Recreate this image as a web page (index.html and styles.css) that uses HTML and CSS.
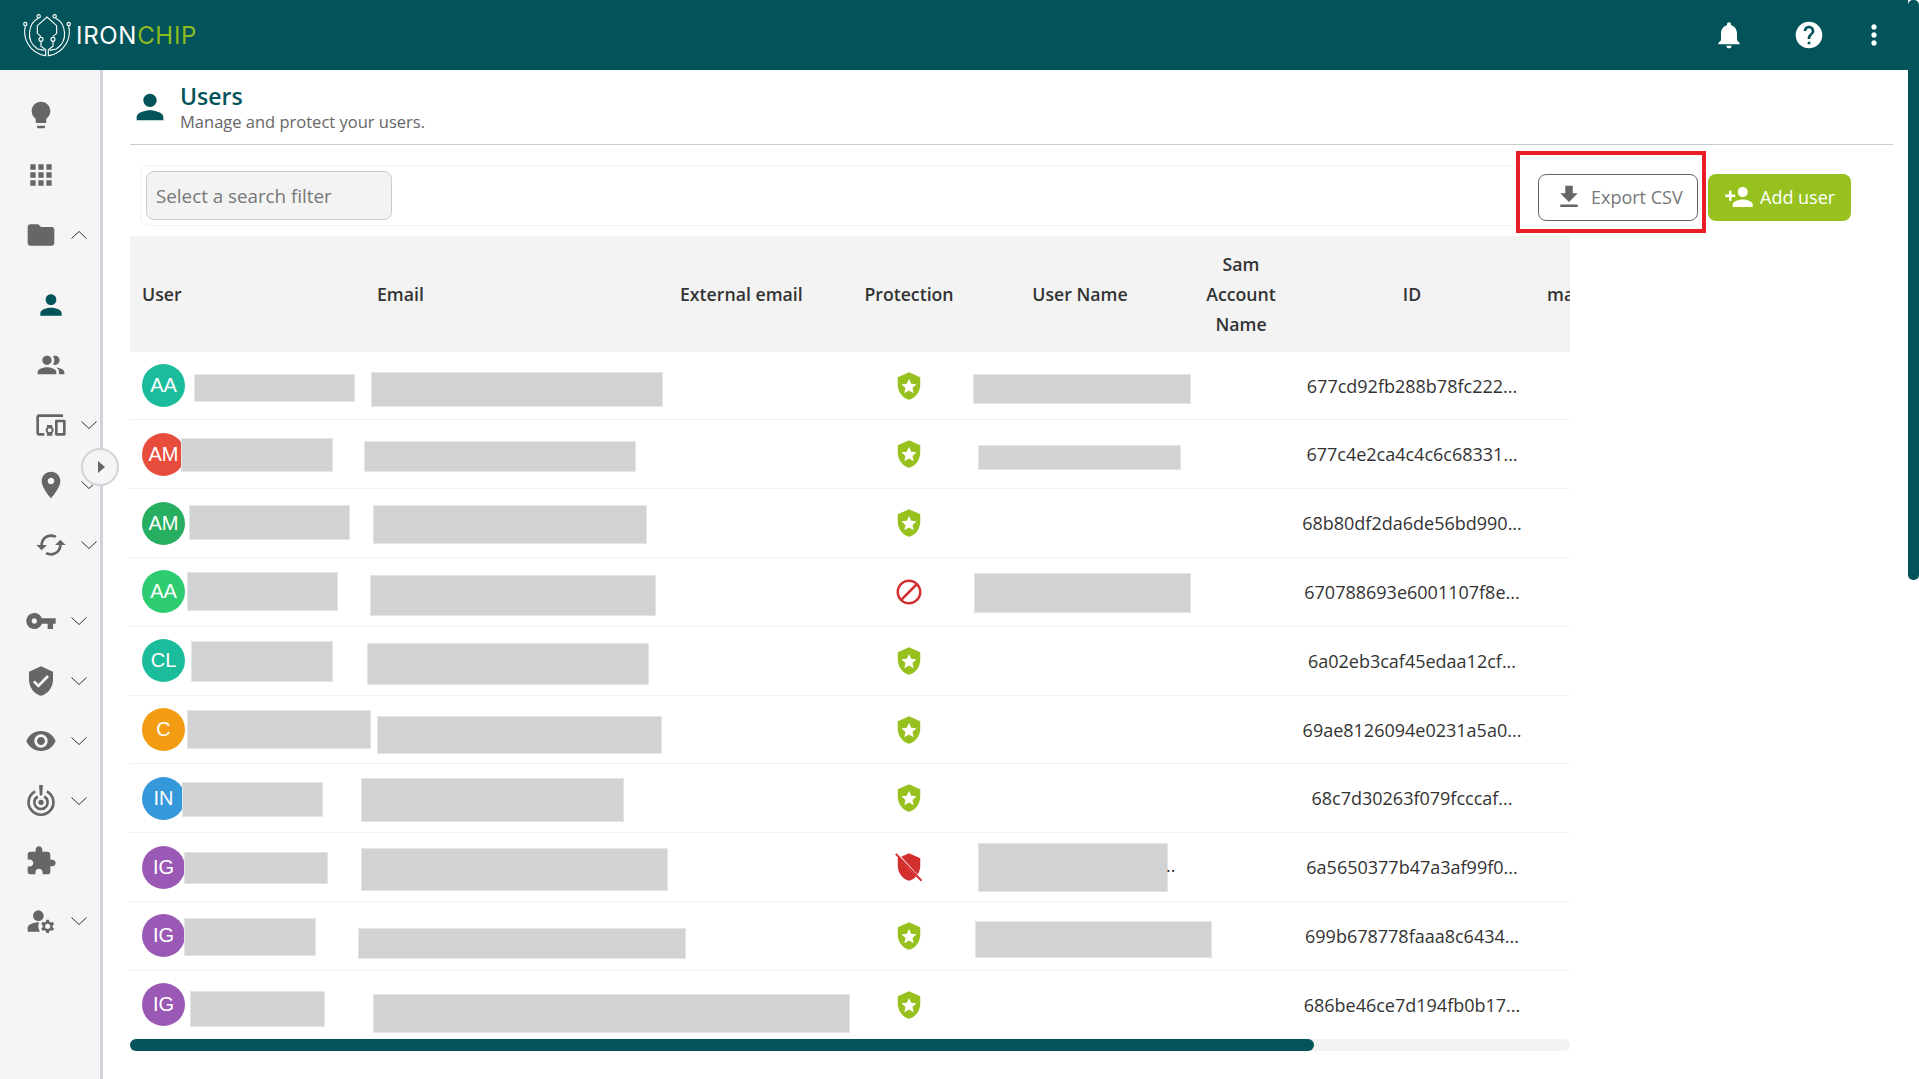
FILE: index.html
```html
<!DOCTYPE html>
<html lang="en">
<head>
    <meta charset="UTF-8">
    <title>Users</title>
    <link rel="stylesheet" href="styles.css">
</head>
<body>
    <svg class="sprite" width="0" height="0">
        <symbol id="i-person" viewBox="0 0 24 24"><path d="M12 12c2.21 0 4-1.79 4-4s-1.79-4-4-4-4 1.79-4 4 1.79 4 4 4zm0 2c-2.67 0-8 1.34-8 4v2h16v-2c0-2.66-5.33-4-8-4z"/></symbol>
        <symbol id="i-down" viewBox="0 0 16 8"><path class="chev-line" d="M.5.5 8 7.5 15.5.5"/></symbol>
        <symbol id="i-up" viewBox="0 0 16 8"><path class="chev-line" d="M.5 7.5 8 .5l7.5 7"/></symbol>
        <symbol id="i-good" viewBox="0 0 24 24"><path class="shield-green" d="M12 1 3 5v6c0 5.55 3.84 10.74 9 12 5.16-1.26 9-6.45 9-12V5l-9-4z"/><path class="star-white" d="m12 6.3 1.75 3.9 4.25.45-3.17 2.85.88 4.2L12 15.55 8.29 17.7l.88-4.2L6 10.65l4.25-.45z"/></symbol>
        <symbol id="i-block" viewBox="0 0 24 24"><path class="fill-red" d="M12 2C6.48 2 2 6.48 2 12s4.48 10 10 10 10-4.48 10-10S17.52 2 12 2zM4 12c0-4.42 3.58-8 8-8 1.85 0 3.55.63 4.9 1.69L5.69 16.9C4.63 15.55 4 13.85 4 12zm8 8c-1.85 0-3.55-.63-4.9-1.69L18.31 7.1C19.37 8.45 20 10.15 20 12c0 4.42-3.58 8-8 8z"/></symbol>
        <symbol id="i-off" viewBox="0 0 24 24"><path class="fill-red" d="M12 1 3 5v6c0 5.55 3.84 10.74 9 12 5.16-1.26 9-6.45 9-12V5l-9-4z"/><path class="slash-white" d="M1 0 23 24"/><path class="slash-red" d="M1.5 1.5 22 23"/></symbol>
    </svg>

    <header class="topbar">
        <div class="brand">
            <svg class="brand-mark" viewBox="65 38 150 132">
                <g class="brand-lines">
                    <path d="M75 77C66 112 86 156 134 166"/>
                    <path d="M205 77C214 112 194 156 146 166"/>
                    <path d="M114 54C84 68 74 122 112 146l20 4"/>
                    <path d="M166 54c30 14 40 68 2 92l-20 4"/>
                    <path d="M122 124v14l14 10v20"/>
                    <path d="M158 124v14l-14 10v20"/>
                    <path d="M122 109l-11-10V76l29-26 29 26v23l-11 10"/>
                    <circle cx="75" cy="71" r="5"/>
                    <circle cx="205" cy="71" r="5"/>
                    <circle cx="115" cy="48" r="5"/>
                    <circle cx="163" cy="48" r="5"/>
                    <circle cx="122" cy="117" r="6"/>
                    <circle cx="158" cy="117" r="6"/>
                </g>
            </svg>
            <span class="brand-name">IRON<span class="brand-accent">CHIP</span></span>
        </div>
        <div class="topbar-actions">
            <svg class="top-icon bell" viewBox="0 0 24 24"><path d="M12 22c1.1 0 2-.9 2-2h-4c0 1.1.89 2 2 2zm6-6v-5c0-3.07-1.64-5.64-4.5-6.32V4c0-.83-.67-1.5-1.5-1.5s-1.5.67-1.5 1.5v.68C7.63 5.36 6 7.92 6 11v5l-2 2v1h16v-1l-2-2z"/></svg>
            <svg class="top-icon help" viewBox="0 0 24 24"><path d="M12 2C6.48 2 2 6.48 2 12s4.48 10 10 10 10-4.48 10-10S17.52 2 12 2zm1 17h-2v-2h2v2zm2.07-7.75l-.9.92C13.45 12.9 13 13.5 13 15h-2v-.5c0-1.1.45-2.1 1.17-2.83l1.24-1.26c.37-.36.59-.86.59-1.41 0-1.1-.9-2-2-2s-2 .9-2 2H8c0-2.21 1.79-4 4-4s4 1.79 4 4c0 .88-.36 1.68-.93 2.25z"/></svg>
            <svg class="top-icon more" viewBox="0 0 24 24"><path d="M12 8c1.1 0 2-.9 2-2s-.9-2-2-2-2 .9-2 2 .9 2 2 2zm0 2c-1.1 0-2 .9-2 2s.9 2 2 2 2-.9 2-2-.9-2-2-2zm0 6c-1.1 0-2 .9-2 2s.9 2 2 2 2-.9 2-2-.9-2-2-2z"/></svg>
        </div>
    </header>

    <div class="layout">
        <nav class="sidebar">
            <div class="nav-item"><svg class="nav-icon" viewBox="0 0 24 24"><path d="M9 21c0 .55.45 1 1 1h4c.55 0 1-.45 1-1v-1H9v1zm3-19C8.14 2 5 5.14 5 9c0 2.38 1.19 4.47 3 5.74V17c0 .55.45 1 1 1h6c.55 0 1-.45 1-1v-2.26c1.81-1.27 3-3.36 3-5.74 0-3.86-3.14-7-7-7z"/></svg></div>
            <div class="nav-item"><svg class="nav-icon" viewBox="0 0 24 24"><path d="M4 8h4V4H4v4zm6 12h4v-4h-4v4zm-6 0h4v-4H4v4zm0-6h4v-4H4v4zm6 0h4v-4h-4v4zm6-10v4h4V4h-4zm-6 4h4V4h-4v4zm6 6h4v-4h-4v4zm0 6h4v-4h-4v4z"/></svg></div>
            <div class="nav-item"><svg class="nav-icon" viewBox="0 0 24 24"><path d="M10 4H4c-1.1 0-1.99.9-1.99 2L2 18c0 1.1.9 2 2 2h16c1.1 0 2-.9 2-2V8c0-1.1-.9-2-2-2h-8l-2-2z"/></svg><svg class="chev"><use href="#i-up"/></svg></div>

            <div class="nav-item sub first-sub"><svg class="nav-icon active" viewBox="0 0 24 24"><use href="#i-person"/></svg></div>
            <div class="nav-item sub"><svg class="nav-icon" viewBox="0 0 24 24"><path d="M9 13.75c-2.34 0-7 1.17-7 3.5V19h14v-1.75c0-2.33-4.66-3.5-7-3.5zM9 12c1.93 0 3.5-1.57 3.5-3.5S10.93 5 9 5 5.5 6.57 5.5 8.5 7.07 12 9 12zm7.04 1.81c1.16.84 1.96 1.96 1.96 3.44V19h4v-1.75c0-2.02-3.5-3.17-5.96-3.44zM15 12c1.93 0 3.5-1.57 3.5-3.5S16.93 5 15 5c-.54 0-1.04.13-1.5.35.63.89 1 1.98 1 3.15s-.37 2.26-1 3.15c.46.22.96.35 1.5.35z"/></svg></div>
            <div class="nav-item sub"><svg class="nav-icon" viewBox="0 0 24 24"><path d="M3 6h18V4H3c-1.1 0-2 .9-2 2v12c0 1.1.9 2 2 2h4v-2H3V6zm10 6H9v1.78c-.61.55-1 1.33-1 2.22s.39 1.67 1 2.22V20h4v-1.78c.61-.55 1-1.34 1-2.22s-.39-1.67-1-2.22V12zm-2 5.5c-.83 0-1.5-.67-1.5-1.5s.67-1.5 1.5-1.5 1.5.67 1.5 1.5-.67 1.5-1.5 1.5zM22 8h-6c-.5 0-1 .5-1 1v10c0 .5.5 1 1 1h6c.5 0 1-.5 1-1V9c0-.5-.5-1-1-1zm-1 10h-4v-8h4v8z"/></svg><svg class="chev"><use href="#i-down"/></svg></div>
            <div class="nav-item sub"><svg class="nav-icon" viewBox="0 0 24 24"><path d="M12 2C8.13 2 5 5.13 5 9c0 5.25 7 13 7 13s7-7.75 7-13c0-3.87-3.13-7-7-7zm0 9.5c-1.38 0-2.5-1.12-2.5-2.5s1.12-2.5 2.5-2.5 2.5 1.12 2.5 2.5-1.12 2.5-2.5 2.5z"/></svg><svg class="chev"><use href="#i-down"/></svg></div>
            <div class="nav-item sub"><svg class="nav-icon" viewBox="0 0 24 24"><path d="M19 8l-4 4h3c0 3.31-2.69 6-6 6-1.01 0-1.97-.25-2.8-.7l-1.46 1.46C8.97 19.54 10.43 20 12 20c4.42 0 8-3.58 8-8h3l-4-4zM6 12c0-3.31 2.69-6 6-6 1.01 0 1.97.25 2.8.7l1.46-1.46C15.03 4.46 13.57 4 12 4c-4.42 0-8 3.58-8 8H1l4 4 4-4H6z"/></svg><svg class="chev"><use href="#i-down"/></svg></div>

            <div class="nav-item group-start"><svg class="nav-icon" viewBox="0 0 24 24"><path d="M12.65 10C11.83 7.67 9.61 6 7 6c-3.31 0-6 2.69-6 6s2.69 6 6 6c2.61 0 4.83-1.67 5.65-4H17v4h4v-4h2v-4H12.65zM7 14c-1.1 0-2-.9-2-2s.9-2 2-2 2 .9 2 2-.9 2-2 2z"/></svg><svg class="chev"><use href="#i-down"/></svg></div>
            <div class="nav-item"><svg class="nav-icon" viewBox="0 0 24 24"><path d="M12 1L3 5v6c0 5.55 3.84 10.74 9 12 5.16-1.26 9-6.45 9-12V5l-9-4zm-2 16l-4-4 1.41-1.41L10 14.17l6.59-6.59L18 9l-8 8z"/></svg><svg class="chev"><use href="#i-down"/></svg></div>
            <div class="nav-item"><svg class="nav-icon" viewBox="0 0 24 24"><path d="M12 4.5C7 4.5 2.73 7.61 1 12c1.73 4.39 6 7.5 11 7.5s9.27-3.11 11-7.5c-1.73-4.39-6-7.5-11-7.5zM12 17c-2.76 0-5-2.24-5-5s2.24-5 5-5 5 2.24 5 5-2.24 5-5 5zm0-8c-1.66 0-3 1.34-3 3s1.34 3 3 3 3-1.34 3-3-1.34-3-3-3z"/></svg><svg class="chev"><use href="#i-down"/></svg></div>
            <div class="nav-item"><svg class="nav-icon" viewBox="0 1.6 24 24"><path class="target-line" d="M7.6 6.4a9.3 9.3 0 1 0 8.8 0"/><path class="target-line" d="M9.6 10.2a5 5 0 1 0 4.8 0"/><circle cx="12" cy="14.6" r="2"/><path d="M10.6 2.4a1.4 1.4 0 0 1 2.8 0l-.5 7h-1.8z"/></svg><svg class="chev"><use href="#i-down"/></svg></div>
            <div class="nav-item"><svg class="nav-icon" viewBox="0 0 24 24"><path d="M20.5 11H19V7c0-1.1-.9-2-2-2h-4V3.5C13 2.12 11.88 1 10.5 1S8 2.12 8 3.5V5H4c-1.1 0-1.99.9-1.99 2v3.8H3.5c1.49 0 2.7 1.21 2.7 2.7s-1.21 2.7-2.7 2.7H2V20c0 1.1.9 2 2 2h3.8v-1.5c0-1.49 1.21-2.7 2.7-2.7 1.49 0 2.7 1.21 2.7 2.7V22H17c1.1 0 2-.9 2-2v-4h1.5c1.38 0 2.5-1.12 2.5-2.5S21.88 11 20.5 11z"/></svg></div>
            <div class="nav-item"><svg class="nav-icon" viewBox="0 0 24 24"><circle cx="10" cy="8" r="4"/><path d="M10.67 13.02c-.22-.01-.44-.02-.67-.02-2.42 0-4.68.67-6.61 1.82-.88.52-1.39 1.5-1.39 2.53V20h9.26c-.79-1.13-1.26-2.51-1.26-4 0-1.07.25-2.07.67-2.98zM20.75 16c0-.22-.03-.42-.06-.63l1.14-1.01-1-1.73-1.45.49c-.32-.27-.68-.48-1.08-.63L18 11h-2l-.3 1.49c-.4.15-.76.36-1.08.63l-1.45-.49-1 1.73 1.14 1.01c-.03.21-.06.41-.06.63s.03.42.06.63l-1.14 1.01 1 1.73 1.45-.49c.32.27.68.48 1.08.63L16 21h2l.3-1.49c.4-.15.76-.36 1.08-.63l1.45.49 1-1.73-1.14-1.01c.03-.21.06-.41.06-.63zM17 18c-1.1 0-2-.9-2-2s.9-2 2-2 2 .9 2 2-.9 2-2 2z"/></svg><svg class="chev"><use href="#i-down"/></svg></div>

            <button class="side-toggle"><span class="toggle-arrow"></span></button>
        </nav>

        <main class="content">
            <div class="page-head">
                <svg class="page-icon"><use href="#i-person"/></svg>
                <div>
                    <h1>Users</h1>
                    <p>Manage and protect your users.</p>
                </div>
            </div>

            <div class="toolbar">
                <div class="search-card">
                    <div class="search-input">Select a search filter</div>
                </div>
                <div class="export-wrap">
                    <button class="btn btn-export">
                        <svg class="btn-icon" viewBox="0 0 24 24"><path d="M19 9h-4V3H9v6H5l7 7 7-7zM5 18v2h14v-2H5z"/></svg>
                        Export CSV
                    </button>
                    <span class="highlight"></span>
                </div>
                <button class="btn btn-add">
                    <svg class="btn-icon" viewBox="0 0 24 24"><path d="M15 12c2.21 0 4-1.79 4-4s-1.79-4-4-4-4 1.79-4 4 1.79 4 4 4zm-9-2V7H4v3H1v2h3v3h2v-3h3v-2H6zm9 4c-2.67 0-8 1.34-8 4v2h16v-2c0-2.66-5.33-4-8-4z"/></svg>
                    Add user
                </button>
            </div>

            <div class="table-wrap">
                <div class="row head">
                    <div class="cell">User</div>
                    <div class="cell">Email</div>
                    <div class="cell">External email</div>
                    <div class="cell center">Protection</div>
                    <div class="cell center">User Name</div>
                    <div class="cell center">Sam Account Name</div>
                    <div class="cell center">ID</div>
                    <div class="cell">mail</div>
                </div>

                <div class="row">
                    <div class="cell"><span class="avatar c-teal">AA</span></div><div class="cell"></div><div class="cell"></div>
                    <div class="cell center"><svg class="status"><use href="#i-good"/></svg></div><div class="cell"></div><div class="cell"></div>
                    <div class="cell center">677cd92fb288b78fc222...</div><div class="cell"></div>
                    <span class="mask m1-name"></span><span class="mask m1-email"></span><span class="mask m1-user"></span>
                </div>
                <div class="row">
                    <div class="cell"><span class="avatar c-red">AM</span></div><div class="cell"></div><div class="cell"></div>
                    <div class="cell center"><svg class="status"><use href="#i-good"/></svg></div><div class="cell"></div><div class="cell"></div>
                    <div class="cell center">677c4e2ca4c4c6c68331...</div><div class="cell"></div>
                    <span class="mask m2-name"></span><span class="mask m2-email"></span><span class="mask m2-user"></span>
                </div>
                <div class="row">
                    <div class="cell"><span class="avatar c-green">AM</span></div><div class="cell"></div><div class="cell"></div>
                    <div class="cell center"><svg class="status"><use href="#i-good"/></svg></div><div class="cell"></div><div class="cell"></div>
                    <div class="cell center">68b80df2da6de56bd990...</div><div class="cell"></div>
                    <span class="mask m3-name"></span><span class="mask m3-email"></span>
                </div>
                <div class="row">
                    <div class="cell"><span class="avatar c-emerald">AA</span></div><div class="cell"></div><div class="cell"></div>
                    <div class="cell center"><svg class="status"><use href="#i-block"/></svg></div><div class="cell"></div><div class="cell"></div>
                    <div class="cell center">670788693e6001107f8e...</div><div class="cell"></div>
                    <span class="mask m4-name"></span><span class="mask m4-email"></span><span class="mask m4-user"></span>
                </div>
                <div class="row">
                    <div class="cell"><span class="avatar c-teal">CL</span></div><div class="cell"></div><div class="cell"></div>
                    <div class="cell center"><svg class="status"><use href="#i-good"/></svg></div><div class="cell"></div><div class="cell"></div>
                    <div class="cell center">6a02eb3caf45edaa12cf...</div><div class="cell"></div>
                    <span class="mask m5-name"></span><span class="mask m5-email"></span>
                </div>
                <div class="row">
                    <div class="cell"><span class="avatar c-orange">C</span></div><div class="cell"></div><div class="cell"></div>
                    <div class="cell center"><svg class="status"><use href="#i-good"/></svg></div><div class="cell"></div><div class="cell"></div>
                    <div class="cell center">69ae8126094e0231a5a0...</div><div class="cell"></div>
                    <span class="mask m6-name"></span><span class="mask m6-email"></span>
                </div>
                <div class="row">
                    <div class="cell"><span class="avatar c-blue">IN</span></div><div class="cell"></div><div class="cell"></div>
                    <div class="cell center"><svg class="status"><use href="#i-good"/></svg></div><div class="cell"></div><div class="cell"></div>
                    <div class="cell center">68c7d30263f079fcccaf...</div><div class="cell"></div>
                    <span class="mask m7-name"></span><span class="mask m7-email"></span>
                </div>
                <div class="row">
                    <div class="cell"><span class="avatar c-purple">IG</span></div><div class="cell"></div><div class="cell"></div>
                    <div class="cell center"><svg class="status"><use href="#i-off"/></svg></div><div class="cell"></div><div class="cell"></div>
                    <div class="cell center">6a5650377b47a3af99f0...</div><div class="cell"></div>
                    <span class="mask m8-name"></span><span class="mask m8-email"></span><span class="mask m8-user"></span><span class="mask-tail">..</span>
                </div>
                <div class="row">
                    <div class="cell"><span class="avatar c-purple">IG</span></div><div class="cell"></div><div class="cell"></div>
                    <div class="cell center"><svg class="status"><use href="#i-good"/></svg></div><div class="cell"></div><div class="cell"></div>
                    <div class="cell center">699b678778faaa8c6434...</div><div class="cell"></div>
                    <span class="mask m9-name"></span><span class="mask m9-email"></span><span class="mask m9-user"></span>
                </div>
                <div class="row last">
                    <div class="cell"><span class="avatar c-purple">IG</span></div><div class="cell"></div><div class="cell"></div>
                    <div class="cell center"><svg class="status"><use href="#i-good"/></svg></div><div class="cell"></div><div class="cell"></div>
                    <div class="cell center">686be46ce7d194fb0b17...</div><div class="cell"></div>
                    <span class="mask m10-name"></span><span class="mask m10-email"></span>
                </div>
            </div>

            <div class="h-scroll"><div class="h-thumb"></div></div>
        </main>
    </div>

    <div class="v-scroll"><div class="v-thumb"></div></div>
</body>
</html>
```

FILE: styles.css
```css
html, body {
    height: 100%;
    overflow: hidden;
}

body {
    margin: 0;
    font-family: "Open Sans", "Noto Sans", sans-serif;
    color: #333;
    background-color: #fff;
}

.sprite {
    position: absolute;
}

/* top bar */

.topbar {
    height: 70px;
    display: flex;
    align-items: center;
    justify-content: space-between;
    background-color: #03545a;
}

.brand {
    display: flex;
    align-items: center;
    padding-left: 22px;
}

.brand-mark {
    width: 50px;
    height: 44px;
}

.brand-lines {
    fill: none;
    stroke: #fff;
    stroke-width: 3.4;
}

.brand-name {
    margin-left: 4px;
    font-family: Inter, "Noto Sans", sans-serif;
    font-size: 24px;
    letter-spacing: 0.7px;
    color: #fff;
}

.brand-accent {
    color: #8dbb1f;
}

.topbar-actions {
    display: flex;
    align-items: center;
    padding-right: 29px;
}

.top-icon {
    width: 32px;
    height: 32px;
    fill: #fff;
}

.help {
    margin-left: 48px;
}

.more {
    margin-left: 33px;
}

/* sidebar */

.layout {
    display: flex;
    height: 1009px;
}

.sidebar {
    position: relative;
    flex: 0 0 100px;
    padding-top: 15px;
    background-color: #f5f5f5;
    border-right: 3px solid #d0d4da;
}

.nav-item {
    height: 60px;
    display: flex;
    align-items: center;
    padding-left: 25px;
}

.nav-item.sub {
    padding-left: 35px;
}

.first-sub {
    margin-top: 10px;
}

.group-start {
    margin-top: 16px;
}

.nav-icon {
    flex: none;
    width: 32px;
    height: 32px;
    fill: #666;
}

.nav-icon.active {
    fill: #03545a;
}

.target-line {
    fill: none;
    stroke: #666;
    stroke-width: 2;
}

.chev {
    flex: none;
    width: 16px;
    height: 8px;
    margin-left: 14px;
}

.chev-line {
    fill: none;
    stroke: #333;
    stroke-width: 1;
}

.side-toggle {
    position: absolute;
    top: 378px;
    left: 81px;
    width: 38px;
    height: 38px;
    padding: 0;
    display: flex;
    align-items: center;
    justify-content: center;
    background-color: #f5f5f5;
    border: 2px solid #d0d4da;
    border-radius: 50%;
}

.toggle-arrow {
    margin-left: 2px;
    border-left: 7px solid #666;
    border-top: 6px solid transparent;
    border-bottom: 6px solid transparent;
}

/* page header */

.content {
    flex: 1;
    min-width: 0;
    padding: 0 26px 0 27px;
}

.page-head {
    height: 74px;
    display: flex;
    align-items: center;
    gap: 10px;
    border-bottom: 1px solid #ccc;
}

.page-icon {
    width: 40px;
    height: 40px;
    fill: #03545a;
}

h1 {
    margin: 0;
    font-size: 23px;
    font-weight: 600;
    line-height: 30px;
    color: #03545a;
}

.page-head p {
    margin: 0;
    font-size: 16.5px;
    line-height: 22px;
    color: #666;
}

/* toolbar */

.toolbar {
    position: relative;
    height: 91px;
    display: flex;
    align-items: flex-start;
    padding: 20px 0 0 10px;
    box-sizing: border-box;
}

.search-card {
    width: 1375px;
    height: 61px;
    box-sizing: border-box;
    padding: 5px;
    border: 1px solid #f3f3f3;
    border-right: 0;
    border-radius: 8px 0 0 8px;
}

.search-input {
    width: 246px;
    height: 49px;
    box-sizing: border-box;
    padding-left: 9px;
    line-height: 49px;
    font-size: 18.8px;
    color: #777;
    background-color: #f3f3f3;
    border: 1px solid #ccc;
    border-radius: 8px;
}

.export-wrap {
    position: relative;
    margin: 9px 0 0 23px;
}

.btn {
    height: 47px;
    display: flex;
    align-items: center;
    box-sizing: border-box;
    font-family: inherit;
    font-size: 18px;
    line-height: 22px;
    border-radius: 8px;
}

.btn-export {
    width: 160px;
    padding: 0 0 1px 15px;
    gap: 7px;
    color: #777;
    background-color: #fff;
    border: 1px solid #666;
}

.btn-add {
    width: 143px;
    margin: 9px 0 0 10px;
    padding: 0 0 1px 16px;
    gap: 6px;
    color: #fff;
    background-color: #97c11f;
    border: 0;
}

.btn-icon {
    flex: none;
    width: 30px;
    height: 30px;
    fill: currentColor;
}

.btn-export .btn-icon {
    fill: #666;
}

.highlight {
    position: absolute;
    top: -23px;
    left: -22px;
    right: -8px;
    bottom: -12px;
    border: 4px solid #e81c24;
}

/* table */

.table-wrap {
    width: 1440px;
    overflow: hidden;
}

.row {
    position: relative;
    width: 1589px;
    height: 68.8px;
    box-sizing: border-box;
    display: grid;
    grid-template-columns: 235px 303px 183px 116px 226px 96px 246px 184px;
    align-items: center;
    font-size: 18px;
    border-bottom: 1px solid #f1f1f1;
}

.row.head {
    height: 115.7px;
    font-size: 17.7px;
    font-weight: 600;
    line-height: 30px;
    background-color: #f3f3f3;
    border-bottom: 0;
}

.row.last {
    height: 68px;
    border-bottom: 0;
}

.cell {
    padding: 0 12px;
    box-sizing: border-box;
}

.cell.center {
    display: flex;
    justify-content: center;
    text-align: center;
    white-space: nowrap;
    padding: 0;
}

.head .cell.center {
    white-space: normal;
}

.status {
    width: 30px;
    height: 30px;
}

.shield-green {
    fill: #97c11f;
}

.star-white {
    fill: #fff;
}

.fill-red {
    fill: #d32f2f;
}

.slash-white {
    stroke: #fff;
    stroke-width: 2;
}

.slash-red {
    stroke: #d32f2f;
    stroke-width: 1.6;
}

.avatar {
    width: 43px;
    height: 43px;
    display: flex;
    align-items: center;
    justify-content: center;
    font-family: "Liberation Sans", sans-serif;
    font-size: 20px;
    color: #fff;
    border-radius: 50%;
}

.c-teal { background-color: #1abc9c; }
.c-red { background-color: #e74c3c; }
.c-green { background-color: #27ae60; }
.c-emerald { background-color: #2ecc71; }
.c-orange { background-color: #f39c12; }
.c-blue { background-color: #3498db; }
.c-purple { background-color: #9b59b6; }

/* blacked out values, laid over the cells */

.mask {
    position: absolute;
    box-sizing: border-box;
    background-color: #d1d2d4;
    border: 1px solid #e4e5e6;
}

.mask-tail {
    position: absolute;
    left: 1036px;
    top: 20px;
}

.m1-name { left: 64px; top: 22px; width: 161px; height: 28px; }
.m1-email { left: 241px; top: 20px; width: 292px; height: 35px; }
.m1-user { left: 843px; top: 22px; width: 218px; height: 30px; }

.m2-name { left: 51px; top: 18px; width: 152px; height: 34px; }
.m2-email { left: 234px; top: 21px; width: 272px; height: 31px; }
.m2-user { left: 848px; top: 25px; width: 203px; height: 25px; }

.m3-name { left: 59px; top: 16px; width: 161px; height: 35px; }
.m3-email { left: 243px; top: 16px; width: 274px; height: 39px; }

.m4-name { left: 57px; top: 14px; width: 151px; height: 39px; }
.m4-email { left: 240px; top: 17px; width: 286px; height: 41px; }
.m4-user { left: 844px; top: 15px; width: 217px; height: 40px; }

.m5-name { left: 61px; top: 14px; width: 142px; height: 41px; }
.m5-email { left: 237px; top: 16px; width: 282px; height: 42px; }

.m6-name { left: 57px; top: 14px; width: 184px; height: 39px; }
.m6-email { left: 247px; top: 20px; width: 285px; height: 38px; }

.m7-name { left: 52px; top: 18px; width: 141px; height: 35px; }
.m7-email { left: 231px; top: 14px; width: 263px; height: 44px; }

.m8-name { left: 54px; top: 19px; width: 144px; height: 32px; }
.m8-email { left: 231px; top: 15px; width: 307px; height: 43px; }
.m8-user { left: 848px; top: 10px; width: 190px; height: 49px; }

.m9-name { left: 54px; top: 16px; width: 132px; height: 38px; }
.m9-email { left: 228px; top: 26px; width: 328px; height: 31px; }
.m9-user { left: 845px; top: 19px; width: 237px; height: 37px; }

.m10-name { left: 60px; top: 20px; width: 135px; height: 36px; }
.m10-email { left: 243px; top: 23px; width: 477px; height: 39px; }

/* scrollbars */

.h-scroll {
    width: 1440px;
    height: 12px;
    background-color: #f2f2f2;
    border-radius: 6px;
}

.h-thumb {
    width: 1184px;
    height: 12px;
    background-color: #03545a;
    border-radius: 6px;
}

.v-scroll {
    position: absolute;
    top: 0;
    right: 0;
    width: 11px;
    height: 580px;
    background-color: #fff;
}

.v-thumb {
    height: 100%;
    background-color: #03545a;
    border-radius: 5px;
}
```
